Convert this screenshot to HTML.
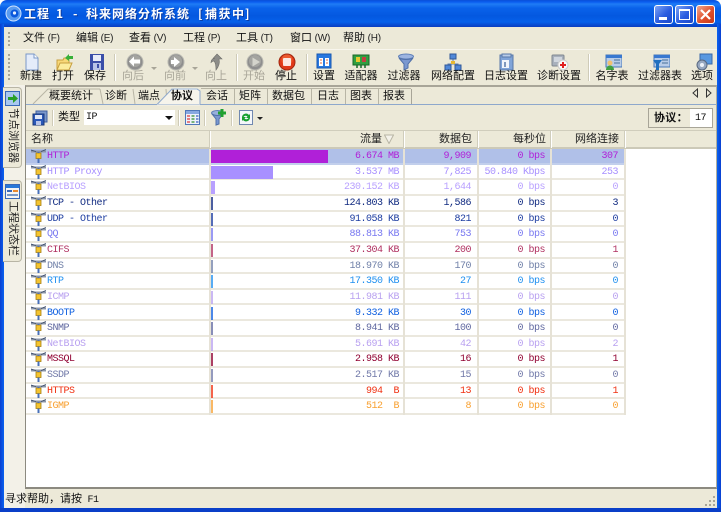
<!DOCTYPE html>
<html lang="zh"><head><meta charset="utf-8"><title>工程 1 - 科来网络分析系统 [捕获中]</title>
<style>
html,body{margin:0;padding:0;width:721px;height:512px;overflow:hidden;background:#fff}
*{box-sizing:border-box}
#w{position:absolute;left:0;top:0;width:721px;height:512px;background:#ece9d8;overflow:hidden;font:11px/13px "Liberation Sans","Noto Sans CJK SC",sans-serif;color:#111;border-radius:7px 7px 0 0}
.a{position:absolute}
.t{position:absolute;white-space:nowrap;font-size:11px;line-height:13px}
.m{font-family:"Liberation Mono","Noto Sans CJK SC",monospace;font-size:10px;letter-spacing:-.5px}
#title{left:0;top:0;width:721px;height:27px;background:linear-gradient(#0a50d8 0,#0a5ef0 2px,#1f7cf5 4px,#0a62ea 8px,#0458e0 16px,#0660ea 22px,#0a3cc0 27px)}
.bl{position:absolute;top:24px;width:4px;height:488px;background:linear-gradient(90deg,#0a3fd0,#0a62f0)}
.wb{position:absolute;top:5px;width:19px;height:19px;border:1px solid #fff;border-radius:3px;background:linear-gradient(135deg,#7ea4f4,#2a5ce0 55%,#1c48c8)}
.ti{position:absolute;top:7px;color:#fff;font-size:12px;line-height:14px;font-weight:bold;letter-spacing:1px;text-shadow:1px 1px #0a3aa0;white-space:nowrap;font-family:"Noto Sans CJK SC","Liberation Sans",sans-serif}
.mn{top:32px;font-size:11px}
.u{font-size:10px;letter-spacing:-.2px;color:#222}
.lb{top:70px;text-align:center;width:60px;font-size:11px}
.dis{color:#a8a598}
.ic{position:absolute;width:18px;height:18px;top:53px}
.sep{position:absolute;width:1px;background:#cfcbb8;border-right:1px solid #fff}
.tb{top:90px;font-size:11px}
.tl{position:absolute;top:88px;width:1px;height:16px;background:#b8b5a5}
.hd{top:133px;font-size:11px;color:#222}
.r{position:absolute;left:26px;width:598px;height:15.65px;border-bottom:2px solid #ebe8de}
.r span{position:absolute;top:1px;white-space:nowrap;font:10px/13px "Liberation Mono",monospace;letter-spacing:-.5px}
.r .n{left:21px}.r .f{right:225px}.r .p{right:153px}.r .b{right:79px}.r .c{right:6px}
.r i{position:absolute;left:185px;top:1px;height:13px;display:block}
.r i.s{width:2px;opacity:.75}
.r svg{position:absolute;left:5px;top:0;width:15px;height:14px}
.v{position:absolute;top:149px;height:266px;width:2px;background:#e6e2d6}
.vt{position:absolute;writing-mode:vertical-rl;text-orientation:sideways;font-size:11px;left:6px;line-height:13px;white-space:nowrap;color:#222}
</style></head><body><div id="w">
<svg width="0" height="0" style="position:absolute"><defs>
<symbol id="tree" viewBox="0 0 15 14"><path d="M0 2.500h15" stroke="#8a94a8" stroke-width="2"/><path d="M0 1L5 2.500M15 .5L10 2.500" stroke="#3a4a68" stroke-width=".9"/><rect x="5" y="4" width="5" height="5.500" fill="#f4c430" stroke="#a88010" stroke-width=".8"/><path d="M7.500 3v1M7.500 9.500v4.500" stroke="#4870b8" stroke-width="2"/></symbol>
<symbol id="cir" viewBox="0 0 18 18"><circle cx="9" cy="9" r="8" fill="#8e8e8e" stroke="#b8b8b0"/><circle cx="9" cy="8" r="6" fill="#a4a4a0"/></symbol>
</defs></svg>

<div class="a" id="title"></div>
<div class="bl" style="left:0"></div><div class="bl" style="right:0;background:linear-gradient(270deg,#0a3fd0,#0a62f0)"></div>
<div class="a" style="left:0;top:508px;width:721px;height:4px;background:#0a3fc8"></div>
<svg class="a" style="left:5px;top:5px" width="17" height="17" viewBox="0 0 17 17"><circle cx="8.500" cy="8.500" r="7.500" fill="#5a9cf0" stroke="#d0e4ff"/><circle cx="9.500" cy="8.500" r="4" fill="#0a58dc"/><circle cx="9.500" cy="8" r="1.600" fill="#e8f0ff"/></svg>
<div class="ti" style="left:24px">工程</div>
<div class="ti" style="left:56px">1</div>
<div class="ti" style="left:73px">-</div>
<div class="ti" style="left:86px">科来网络分析系统</div>
<div class="ti" style="left:198px">[</div>
<div class="ti" style="left:205px;letter-spacing:1.500px">捕获中</div>
<div class="ti" style="left:245px">]</div>
<div class="wb" style="left:654px"><div class="a" style="left:4px;top:11px;width:8px;height:3px;background:#fff"></div></div>
<div class="wb" style="left:675px"><div class="a" style="left:3px;top:3px;width:11px;height:11px;border:1px solid #fff;border-top-width:2px"></div></div>
<div class="wb" style="left:696px;background:linear-gradient(135deg,#f0a890,#e0502c 55%,#c83818)"><svg class="a" style="left:3px;top:3px" width="11" height="11"><path d="M1 1L10 10M10 1L1 10" stroke="#fff" stroke-width="2.200"/></svg></div>

<!-- menu -->
<div class="a" style="left:8px;top:32px;width:2px;height:14px;border-left:2px dotted #a8a598"></div>
<div class="a" style="left:4px;top:49px;width:713px;height:1px;background:#f8f6ee"></div>
<div class="t mn" style="left:23px;top:32px">文件<span class="u"> (F)</span></div>
<div class="t mn" style="left:76px">编辑<span class="u"> (E)</span></div>
<div class="t mn" style="left:129px">查看<span class="u"> (V)</span></div>
<div class="t mn" style="left:183px">工程<span class="u"> (P)</span></div>
<div class="t mn" style="left:236px">工具<span class="u"> (T)</span></div>
<div class="t mn" style="left:290px">窗口<span class="u"> (W)</span></div>
<div class="t mn" style="left:343px">帮助<span class="u"> (H)</span></div>

<!-- toolbar -->
<div class="a" style="left:8px;top:54px;width:2px;height:26px;border-left:2px dotted #a8a598"></div>
<svg class="ic" style="left:23px" viewBox="0 0 18 18"><path d="M3 1h8l4 4v12H3z" fill="#e4ecfa" stroke="#7a98c8"/><path d="M11 1v4h4" fill="#fff" stroke="#7a98c8"/></svg>
<svg class="ic" style="left:56px" viewBox="0 0 18 18"><path d="M1 7h6l1-2h5v12H1z" fill="#f8d878" stroke="#c8a040"/><path d="M1 17l3-7h12l-3 7z" fill="#fcec9c" stroke="#c8a040"/><path d="M9 5l4-4v2h4v3h-4v2z" fill="#38b038"/></svg>
<svg class="ic" style="left:88px" viewBox="0 0 18 18"><rect x="2" y="1" width="14" height="16" fill="#3a4ea8"/><rect x="5" y="2" width="8" height="6" fill="#e8ecf8"/><rect x="5" y="10" width="8" height="7" fill="#b8c4e8"/><rect x="9" y="11" width="2" height="4" fill="#3a4ea8"/></svg>
<svg class="ic" style="left:126px" viewBox="0 0 18 18"><use href="#cir"/><path d="M11 4v3H8V4L3 9l5 5v-3h6V7h-3z" fill="#fff" transform="translate(0 -.500)"/></svg>
<svg class="ic" style="left:167px" viewBox="0 0 18 18"><use href="#cir"/><path d="M7 4v3H4v4h3v3l6-5z" fill="#fff"/></svg>
<svg class="ic" style="left:208px" viewBox="0 0 18 18"><path d="M9 1l5 5h-3c1 4-.5 8-3 11 0-3 0-7-2-9-1 0-2 .5-3 1.500 0-3 2-4 4-4H5z" fill="#8c8c88" stroke="#6c6c68" stroke-width=".6"/></svg>
<svg class="ic" style="left:246px" viewBox="0 0 18 18"><use href="#cir"/><path d="M6.500 4.500v9L14 9z" fill="#d4d4cc"/></svg>
<svg class="ic" style="left:278px" viewBox="0 0 18 18"><circle cx="9" cy="9" r="8" fill="#e03818" stroke="#a02810"/><circle cx="9" cy="7" r="5.500" fill="#f06838" opacity=".7"/><rect x="5" y="5" width="8" height="8" rx="1" fill="#fff" opacity=".85"/></svg>
<svg class="ic" style="left:315px" viewBox="0 0 18 18"><rect x="2" y="1" width="14" height="14" fill="#2878e0" stroke="#1858b0"/><rect x="4" y="5" width="4" height="8" fill="#fff"/><rect x="10" y="5" width="4" height="8" fill="#fff"/><path d="M5 7h2M5 10h2M11 7h2M11 10h2" stroke="#e06840"/></svg>
<svg class="ic" style="left:352px" viewBox="0 0 18 18"><rect x="1" y="2" width="16" height="10" fill="#30a040" stroke="#186828"/><rect x="4" y="4" width="4" height="5" fill="#e8c830"/><rect x="10" y="4" width="4" height="5" fill="#c04040"/><path d="M5 12v3M9 12v3M13 12v3" stroke="#186828" stroke-width="1.500"/></svg>
<svg class="ic" style="left:397px" viewBox="0 0 18 18"><ellipse cx="9" cy="3.500" rx="7.500" ry="2.500" fill="#9cb4e0" stroke="#6080b8"/><path d="M2 5l5 6v6l4-2v-4l5-6c-3 2-11 2-14 0z" fill="#7a98d0" stroke="#5070a8"/></svg>
<svg class="ic" style="left:444px" viewBox="0 0 18 18"><path d="M9 6v4M4 14v-3h10v3" stroke="#6080b0" fill="none"/><rect x="6" y="1" width="6" height="5" fill="#5088d8" stroke="#305898"/><rect x="1" y="12" width="6" height="5" fill="#5088d8" stroke="#305898"/><rect x="11" y="12" width="6" height="5" fill="#5088d8" stroke="#305898"/><rect x="7" y="8" width="4" height="3" fill="#e8b830"/></svg>
<svg class="ic" style="left:497px" viewBox="0 0 18 18"><rect x="3" y="2" width="13" height="15" fill="#80a4d8" stroke="#5878a8"/><rect x="5" y="1" width="9" height="3" fill="#b8cce8" stroke="#5878a8"/><rect x="5" y="7" width="7" height="8" fill="#f0f4fa"/><path d="M8 9v5" stroke="#5878a8" stroke-width="1.500"/></svg>
<svg class="ic" style="left:551px" viewBox="0 0 18 18"><rect x="1" y="2" width="12" height="11" rx="1" fill="#a8b0bc" stroke="#808890"/><rect x="3" y="4" width="8" height="5" fill="#d0d6de"/><circle cx="12" cy="12" r="5" fill="#f8f8f8" stroke="#ccc"/><path d="M12 9v6M9 12h6" stroke="#e02020" stroke-width="2"/></svg>
<svg class="ic" style="left:604px" viewBox="0 0 18 18"><rect x="2" y="2" width="16" height="12" fill="#b8cce8" stroke="#4878b8"/><rect x="2" y="2" width="16" height="3" fill="#3878d0"/><path d="M10 7h6M10 10h6" stroke="#487098"/><circle cx="6" cy="10" r="2.500" fill="#f0c070"/><path d="M2 17c0-6 8-6 8 0z" fill="#40a040"/></svg>
<svg class="ic" style="left:652px" viewBox="0 0 18 18"><rect x="2" y="2" width="16" height="12" fill="#b8cce8" stroke="#4878b8"/><rect x="2" y="2" width="16" height="3" fill="#3878d0"/><path d="M10 7h6M10 10h6" stroke="#487098"/><path d="M1 7h9L7 11v6H4v-6z" fill="#2070c0"/></svg>
<svg class="ic" style="left:695px" viewBox="0 0 18 18"><rect x="5" y="1" width="12" height="10" fill="#5898e0" stroke="#3868a8"/><circle cx="7" cy="12" r="5" fill="#98a8c0" stroke="#586880"/><circle cx="7" cy="12" r="2" fill="#eef2f8"/></svg>
<div class="a" style="left:151px;top:67px;width:0;height:0;border:3px solid transparent;border-top:3px solid #a8a598"></div>
<div class="a" style="left:192px;top:67px;width:0;height:0;border:3px solid transparent;border-top:3px solid #a8a598"></div>
<div class="sep" style="left:114px;top:54px;height:27px;width:2px"></div>
<div class="sep" style="left:236px;top:54px;height:27px;width:2px"></div>
<div class="sep" style="left:306px;top:54px;height:27px;width:2px"></div>
<div class="sep" style="left:588px;top:54px;height:27px;width:2px"></div>
<div class="t lb" style="left:1px">新建</div>
<div class="t lb" style="left:33px">打开</div>
<div class="t lb" style="left:65px">保存</div>
<div class="t lb dis" style="left:103px">向后</div>
<div class="t lb dis" style="left:145px">向前</div>
<div class="t lb dis" style="left:186px">向上</div>
<div class="t lb dis" style="left:224px">开始</div>
<div class="t lb" style="left:256px">停止</div>
<div class="t lb" style="left:294px">设置</div>
<div class="t lb" style="left:331px">适配器</div>
<div class="t lb" style="left:374px">过滤器</div>
<div class="t lb" style="left:423px">网络配置</div>
<div class="t lb" style="left:476px">日志设置</div>
<div class="t lb" style="left:529px">诊断设置</div>
<div class="t lb" style="left:582px">名字表</div>
<div class="t lb" style="left:630px">过滤器表</div>
<div class="t lb" style="left:672px">选项</div>

<!-- left pane -->
<div class="a" style="left:4px;top:85px;width:21px;height:423px;background:#f3f1e8"></div>
<div class="a" style="left:3px;top:87px;width:19px;height:81px;background:#ece9d8;border:1px solid #b8b5a5;border-left:0;border-radius:0 4px 4px 0"></div>
<div class="a" style="left:3px;top:180px;width:19px;height:82px;background:#ece9d8;border:1px solid #b8b5a5;border-left:0;border-radius:0 4px 4px 0"></div>
<svg class="a" style="left:5px;top:91px" width="15" height="15" viewBox="0 0 15 15"><rect x=".5" y=".5" width="14" height="14" fill="#a8c8f0" stroke="#3868b8"/><path d="M3 6h5V3l5 4.500L8 12V9H3z" fill="#28a028"/></svg>
<svg class="a" style="left:5px;top:184px" width="15" height="15" viewBox="0 0 15 15"><rect x=".5" y=".5" width="14" height="14" fill="#f4f4f4" stroke="#3868b8"/><rect x="1" y="1" width="13" height="3" fill="#2878d8"/><rect x="2" y="6" width="5" height="2" fill="#3868b8"/><rect x="8" y="6" width="5" height="2" fill="#e88830"/><rect x="2" y="10" width="11" height="2" fill="#7898c8"/></svg>
<div class="vt" style="top:108px">节点浏览器</div>
<div class="vt" style="top:201px">工程状态栏</div>

<!-- content frame -->
<div class="a" style="left:25px;top:85px;width:692px;height:404px;border:1px solid #8c8a80;border-top:2px solid #a8a598;border-right:1px solid #b0ae9f;border-bottom:2px solid #8c8a80"></div>
<div class="a" style="left:26px;top:130px;width:690px;height:357px;background:#fff"></div>

<!-- tab strip -->
<div class="a" style="left:26px;top:104px;width:690px;height:1px;background:#8ea8cc"></div>
<svg class="a" style="left:26px;top:86px" width="400" height="20" viewBox="0 0 400 20" fill="none"><path d="M7 18L22 3h52M74 3l3 15M107 3l2 15M140 3l1 15" stroke="#b8b5a5"/></svg>
<svg class="a" style="left:156px;top:86px" width="50" height="20" viewBox="0 0 50 20"><path d="M1 18.500L16 3h25l3 2v13.500z" fill="#f6f4ec" stroke="#8ea8cc"/><path d="M16 3h25" stroke="#a0bce0"/><path d="M1 19h43" stroke="#f6f4ec"/></svg>
<div class="tl" style="left:234px"></div><div class="tl" style="left:267px"></div><div class="tl" style="left:311px"></div><div class="tl" style="left:345px"></div><div class="tl" style="left:378px"></div>
<div class="a" style="left:201px;top:88px;width:210px;height:1px;background:#b8b5a5"></div>
<div class="a" style="left:411px;top:89px;width:1px;height:15px;background:#a8a598"></div>
<div class="t tb" style="left:49px">概要统计</div>
<div class="t tb" style="left:105px">诊断</div>
<div class="t tb" style="left:138px">端点</div>
<div class="t tb" style="left:171px;font-weight:bold">协议</div>
<div class="t tb" style="left:206px">会话</div>
<div class="t tb" style="left:239px">矩阵</div>
<div class="t tb" style="left:272px">数据包</div>
<div class="t tb" style="left:317px">日志</div>
<div class="t tb" style="left:350px">图表</div>
<div class="t tb" style="left:383px">报表</div>
<svg class="a" style="left:691px;top:88px" width="22" height="10"><path d="M6.500 1L2 5l4.500 4zM15.500 1L20 5l-4.500 4z" fill="#ece9d8" stroke="#333"/></svg>

<!-- second toolbar -->
<svg class="a" style="left:32px;top:110px" width="16" height="16" viewBox="0 0 16 16"><rect x="4" y="1" width="11" height="11" fill="#7a98cc" stroke="#4060a0"/><rect x="1" y="4" width="11" height="11" fill="#2a58b8" stroke="#1a3878"/><rect x="3" y="5" width="7" height="4" fill="#e0e8f8"/><rect x="4" y="11" width="5" height="4" fill="#b8c4e8"/></svg>
<div class="sep" style="left:52px;top:110px;height:16px;width:2px"></div>
<div class="t" style="left:58px;top:111px">类型</div>
<div class="a" style="left:84px;top:110px;width:91px;height:15px;background:#fff"></div>
<div class="t m" style="left:86px;top:111px">IP</div>
<div class="a" style="left:165px;top:116px;width:0;height:0;border:4px solid transparent;border-top:4px solid #111"></div>
<div class="sep" style="left:178px;top:110px;height:16px;width:2px"></div>
<svg class="a" style="left:185px;top:110px" width="15" height="15" viewBox="0 0 15 15"><rect x=".5" y=".5" width="14" height="14" fill="#eef2fa" stroke="#5078b8"/><rect x="1" y="1" width="13" height="3" fill="#88a8e0"/><path d="M2 6h3M2 9h3M2 12h3" stroke="#e05858" stroke-width="1.500"/><path d="M6.500 6h3M6.500 9h3M6.500 12h3" stroke="#50a050" stroke-width="1.500"/><path d="M11 6h2.500M11 9h2.500M11 12h2.500" stroke="#5878c8" stroke-width="1.500"/></svg>
<div class="sep" style="left:204px;top:110px;height:16px;width:2px"></div>
<svg class="a" style="left:211px;top:109px" width="16" height="17" viewBox="0 0 16 17"><ellipse cx="6.500" cy="4" rx="6" ry="2.500" fill="#98b0dc" stroke="#6080b8"/><path d="M1 5l4 5v6l3-1v-5l4-5c-3 2-8 2-11 0z" fill="#7a98d0" stroke="#5070a8"/><path d="M11 0v8M7 4h8" stroke="#20a030" stroke-width="3"/></svg>
<div class="sep" style="left:231px;top:110px;height:16px;width:2px"></div>
<svg class="a" style="left:239px;top:110px" width="14" height="15" viewBox="0 0 14 15"><rect x=".5" y=".5" width="13" height="14" fill="#f4f6fa" stroke="#7088b0"/><path d="M3 7a4 4 0 0 1 7-2l1-1v4H7l1.500-1.500A2.500 2.500 0 0 0 4.500 7zM11 8a4 4 0 0 1-7 2l-1 1V7h4L5.500 8.500A2.500 2.500 0 0 0 9.500 8z" fill="#18a030"/></svg>
<div class="a" style="left:257px;top:117px;width:0;height:0;border:3px solid transparent;border-top:3px solid #222"></div>
<div class="a" style="left:648px;top:108px;width:65px;height:20px;background:#ece9d8;border:1px solid #a8a598"></div>
<div class="a" style="left:690px;top:109px;width:22px;height:18px;background:#fff"></div>
<div class="t" style="left:654px;top:112px;font-weight:bold;letter-spacing:.3px">协议：</div>
<div class="t m" style="left:695px;top:112px">17</div>

<!-- header -->
<div class="a" style="left:26px;top:130px;width:690px;height:19px;background:#ece9d8;border-bottom:2px solid #ccc9b8;border-top:1px solid #d0cdbc"></div>
<div class="a" style="left:209px;top:131px;width:2px;height:17px;background:#d0cdbc;border-right:1px solid #fff"></div>
<div class="a" style="left:403px;top:131px;width:2px;height:17px;background:#d0cdbc;border-right:1px solid #fff"></div>
<div class="a" style="left:477px;top:131px;width:2px;height:17px;background:#d0cdbc;border-right:1px solid #fff"></div>
<div class="a" style="left:550px;top:131px;width:2px;height:17px;background:#d0cdbc;border-right:1px solid #fff"></div>
<div class="a" style="left:624px;top:131px;width:2px;height:17px;background:#d0cdbc;border-right:1px solid #fff"></div>
<div class="t hd" style="left:31px">名称</div>
<div class="t hd" style="left:360px">流量</div>
<svg class="a" style="left:384px;top:134px" width="10" height="10"><path d="M.5 1h9L5 9.500z" fill="#f4f2ea" stroke="#b8b5a5"/></svg>
<div class="t hd" style="left:439px">数据包</div>
<div class="t hd" style="left:513px">每秒位</div>
<div class="t hd" style="left:575px">网络连接</div>

<!-- rows -->
<div class="r" style="top:149px;color:#b020d8;background:#b0c0e8;border-bottom-color:#c2cfec"><svg><use href="#tree"/></svg><i style="width:117px;background:#b020d8"></i><span class="n">HTTP</span><span class="f">6.674 MB</span><span class="p">9,909</span><span class="b">0 bps</span><span class="c">307</span></div>
<div class="r" style="top:164.650px;color:#a890ff"><svg><use href="#tree"/></svg><i style="width:62px;background:#a890ff"></i><span class="n">HTTP Proxy</span><span class="f">3.537 MB</span><span class="p">7,825</span><span class="b">50.840 Kbps</span><span class="c">253</span></div>
<div class="r" style="top:180.300px;color:#b8a0ff"><svg><use href="#tree"/></svg><i style="width:4px;background:#b8a0ff"></i><span class="n">NetBIOS</span><span class="f">230.152 KB</span><span class="p">1,644</span><span class="b">0 bps</span><span class="c">0</span></div>
<div class="r" style="top:195.950px;color:#102a80"><svg><use href="#tree"/></svg><i class="s" style="background:#102a80"></i><span class="n">TCP - Other</span><span class="f">124.803 KB</span><span class="p">1,586</span><span class="b">0 bps</span><span class="c">3</span></div>
<div class="r" style="top:211.600px;color:#1c3ca0"><svg><use href="#tree"/></svg><i class="s" style="background:#1c3ca0"></i><span class="n">UDP - Other</span><span class="f">91.058 KB</span><span class="p">821</span><span class="b">0 bps</span><span class="c">0</span></div>
<div class="r" style="top:227.250px;color:#7878f0"><svg><use href="#tree"/></svg><i class="s" style="background:#7878f0"></i><span class="n">QQ</span><span class="f">88.813 KB</span><span class="p">753</span><span class="b">0 bps</span><span class="c">0</span></div>
<div class="r" style="top:242.900px;color:#b03060"><svg><use href="#tree"/></svg><i class="s" style="background:#b03060"></i><span class="n">CIFS</span><span class="f">37.304 KB</span><span class="p">200</span><span class="b">0 bps</span><span class="c">1</span></div>
<div class="r" style="top:258.550px;color:#7080a8"><svg><use href="#tree"/></svg><i class="s" style="background:#7080a8"></i><span class="n">DNS</span><span class="f">18.970 KB</span><span class="p">170</span><span class="b">0 bps</span><span class="c">0</span></div>
<div class="r" style="top:274.200px;color:#2090f0"><svg><use href="#tree"/></svg><i class="s" style="background:#2090f0"></i><span class="n">RTP</span><span class="f">17.350 KB</span><span class="p">27</span><span class="b">0 bps</span><span class="c">0</span></div>
<div class="r" style="top:289.850px;color:#b8a0f0"><svg><use href="#tree"/></svg><i class="s" style="background:#b8a0f0"></i><span class="n">ICMP</span><span class="f">11.981 KB</span><span class="p">111</span><span class="b">0 bps</span><span class="c">0</span></div>
<div class="r" style="top:305.500px;color:#1060e0"><svg><use href="#tree"/></svg><i class="s" style="background:#1060e0"></i><span class="n">BOOTP</span><span class="f">9.332 KB</span><span class="p">30</span><span class="b">0 bps</span><span class="c">0</span></div>
<div class="r" style="top:321.150px;color:#6068a0"><svg><use href="#tree"/></svg><i class="s" style="background:#6068a0"></i><span class="n">SNMP</span><span class="f">8.941 KB</span><span class="p">100</span><span class="b">0 bps</span><span class="c">0</span></div>
<div class="r" style="top:336.800px;color:#b8a0f0"><svg><use href="#tree"/></svg><i class="s" style="background:#b8a0f0"></i><span class="n">NetBIOS</span><span class="f">5.691 KB</span><span class="p">42</span><span class="b">0 bps</span><span class="c">2</span></div>
<div class="r" style="top:352.450px;color:#900030"><svg><use href="#tree"/></svg><i class="s" style="background:#900030"></i><span class="n">MSSQL</span><span class="f">2.958 KB</span><span class="p">16</span><span class="b">0 bps</span><span class="c">1</span></div>
<div class="r" style="top:368.100px;color:#7078a8"><svg><use href="#tree"/></svg><i class="s" style="background:#7078a8"></i><span class="n">SSDP</span><span class="f">2.517 KB</span><span class="p">15</span><span class="b">0 bps</span><span class="c">0</span></div>
<div class="r" style="top:383.750px;color:#f03010"><svg><use href="#tree"/></svg><i class="s" style="background:#f03010"></i><span class="n">HTTPS</span><span class="f">994&nbsp;&nbsp;B</span><span class="p">13</span><span class="b">0 bps</span><span class="c">1</span></div>
<div class="r" style="top:399.400px;color:#f8a030"><svg><use href="#tree"/></svg><i class="s" style="background:#f8a030"></i><span class="n">IGMP</span><span class="f">512&nbsp;&nbsp;B</span><span class="p">8</span><span class="b">0 bps</span><span class="c">0</span></div>
<div class="v" style="left:209px"></div><div class="v" style="left:403px"></div><div class="v" style="left:477px"></div><div class="v" style="left:550px"></div><div class="v" style="left:624px"></div>

<!-- status -->
<div class="t" style="left:5px;top:493px;color:#111;font-size:11px">寻求帮助，请按<span class="m"> F1</span></div>
<svg class="a" style="left:704px;top:495px" width="12" height="12"><g fill="#a8a598"><rect x="9" y="1" width="2" height="2"/><rect x="5" y="5" width="2" height="2"/><rect x="9" y="5" width="2" height="2"/><rect x="1" y="9" width="2" height="2"/><rect x="5" y="9" width="2" height="2"/><rect x="9" y="9" width="2" height="2"/></g></svg>
</div></body></html>
